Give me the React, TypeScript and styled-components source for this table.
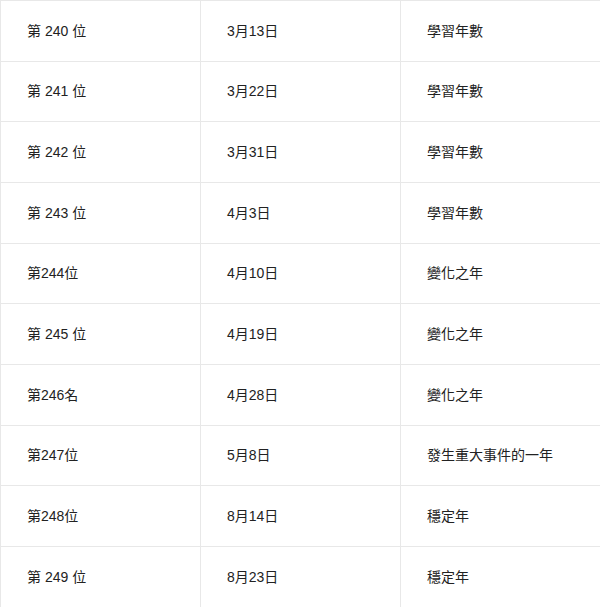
import * as React from "react";
import styled, { createGlobalStyle } from "styled-components";

const rows = [
  ["第 240 位", "3月13日", "學習年數"],
  ["第 241 位", "3月22日", "學習年數"],
  ["第 242 位", "3月31日", "學習年數"],
  ["第 243 位", "4月3日", "學習年數"],
  ["第244位", "4月10日", "變化之年"],
  ["第 245 位", "4月19日", "變化之年"],
  ["第246名", "4月28日", "變化之年"],
  ["第247位", "5月8日", "發生重大事件的一年"],
  ["第248位", "8月14日", "穩定年"],
  ["第 249 位", "8月23日", "穩定年"],
];

const GlobalStyle = createGlobalStyle`
  html, body {
    margin: 0;
    padding: 0;
    background: #fff;
  }
  body {
    font-family: "Liberation Sans", "Noto Sans CJK TC", sans-serif;
    color: #222;
  }
`;

const Table = styled.div`
  width: 601px;
  height: 607px;
  display: grid;
  grid-template-columns: 200px 200px 201px;
  grid-template-rows: repeat(10, 60.67px);
  border-top: 1px solid #e8e8e8;
  border-left: 1px solid #e8e8e8;
  box-sizing: border-box;
  overflow: hidden;
`;

const Cell = styled.div`
  display: flex;
  align-items: center;
  padding: 0 0 2px 26px;
  font-size: 14px;
  border-right: 1px solid #e8e8e8;
  border-bottom: 1px solid #e8e8e8;
  box-sizing: border-box;
`;

export default function App() {
  return (
    <>
      <GlobalStyle />
      <Table>
        {rows.map((r, i) =>
          r.map((c, j) => <Cell key={i + "-" + j}>{c}</Cell>)
        )}
      </Table>
    </>
  );
}
